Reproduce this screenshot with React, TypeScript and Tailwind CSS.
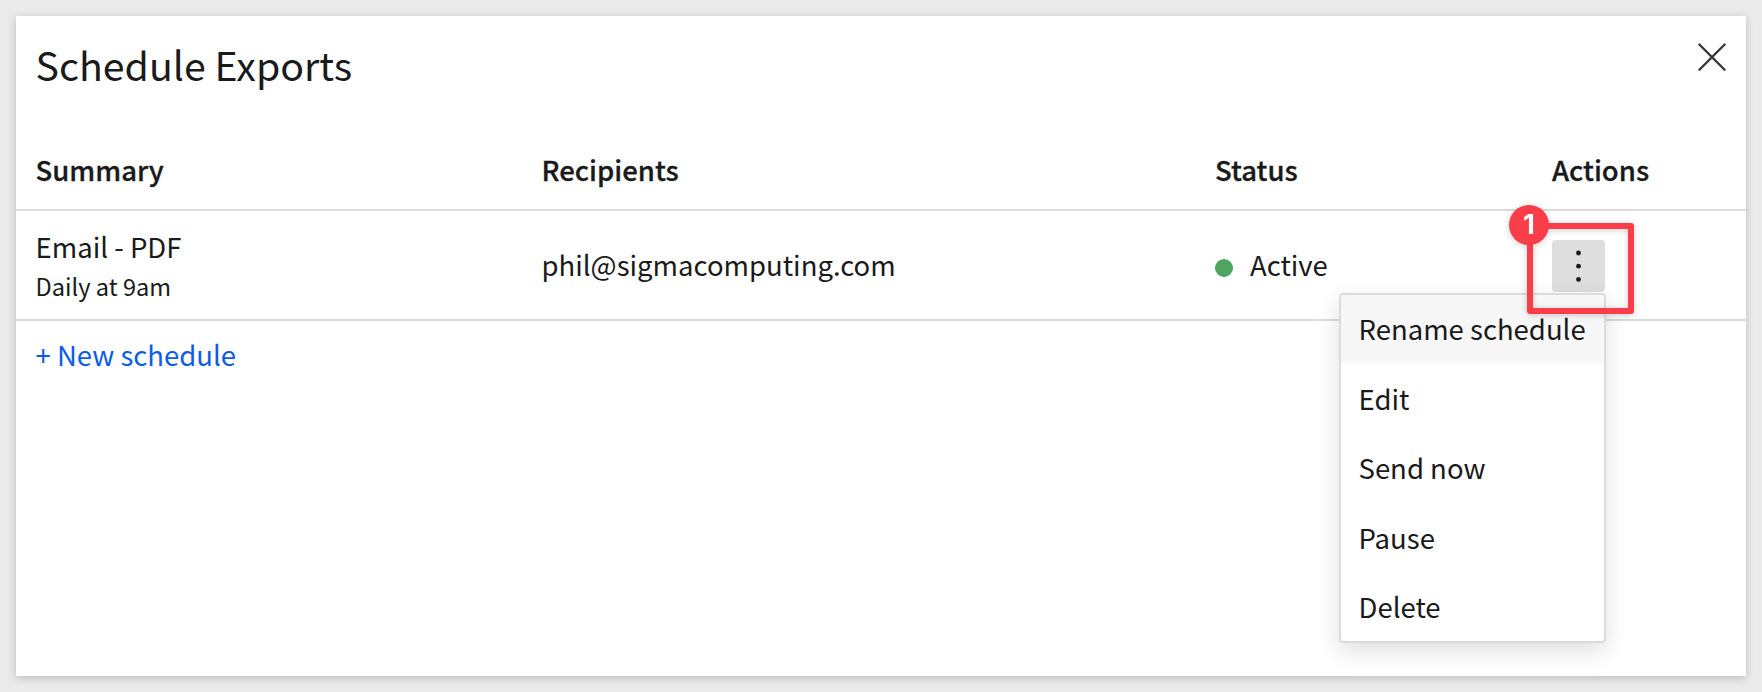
const columns = "grid grid-cols-[506px_673.5px_337px_1fr] pl-[19.5px]";

const menuItems = ["Rename schedule", "Edit", "Send now", "Pause", "Delete"];

function CloseIcon() {
  return (
    <svg width="28" height="28" viewBox="0 0 28 28" fill="none" stroke="#333338" strokeWidth="2.3" strokeLinecap="round">
      <path d="M1.4 1.5 26.6 26.7M26.6 1.5 1.4 26.7" />
    </svg>
  );
}

function KebabIcon() {
  return (
    <svg width="53" height="52" viewBox="0 0 53 52" fill="#1a1a1a">
      <circle cx="26.5" cy="13" r="2.4" />
      <circle cx="26.5" cy="26.2" r="2.4" />
      <circle cx="26.5" cy="39.4" r="2.4" />
    </svg>
  );
}

function ActionsMenu() {
  return (
    <ul className="absolute top-[53px] right-[-1px] w-[267px] rounded-[4px] border-2 border-[#dbdbdb] bg-white shadow-[0_8px_24px_rgba(0,0,0,0.13)]">
      {menuItems.map((item, i) => (
        <li
          key={item}
          className={
            i === 0
              ? "flex h-[68px] items-center whitespace-nowrap bg-[#f7f7f7] pb-[3px] pl-[17.5px]"
              : "flex h-[69.5px] items-center whitespace-nowrap pl-[17.5px]"
          }
        >
          {item}
        </li>
      ))}
    </ul>
  );
}

function Callout() {
  return (
    <div className="pointer-events-none absolute top-[-17px] left-[-25px] h-[91px] w-[107px] rounded-[3px] border-6 border-[#f93e49] drop-shadow-[0_1px_3px_rgba(0,0,0,0.2)]">
      <div className="absolute top-[-24px] left-[-24px] flex size-10 items-center justify-center rounded-full bg-[#f93e49] pb-px font-[Inter,sans-serif] text-[27.5px] leading-none font-bold text-white">
        1
      </div>
    </div>
  );
}

export default function App() {
  return (
    <div className="h-[692px] bg-[#eaeaea] p-4 font-['Noto_Sans_CJK_SC',sans-serif] text-[27.5px] leading-10 text-[#1a1a1a]">
      <section className="flex h-[660px] flex-col bg-white shadow-[0_2px_8px_rgba(0,0,0,0.2)]">
        <header className="flex h-[121px] items-start justify-between pr-5 pl-[19.5px]">
          <h1 className="pt-[18px] text-[39.3px] leading-[60px]">Schedule Exports</h1>
          <button className="mt-[27px]" aria-label="Close">
            <CloseIcon />
          </button>
        </header>
        <div className={`${columns} h-[74px] items-center border-b-2 border-[#dbdbdb] pb-[9px] font-medium [-webkit-text-stroke:0.3px_#1a1a1a]`}>
          <div>Summary</div>
          <div>Recipients</div>
          <div>Status</div>
          <div>Actions</div>
        </div>
        <div className={`${columns} h-[110px] items-center border-b-2 border-[#dbdbdb]`}>
          <div>
            <div>Email - PDF</div>
            <div className="-mb-0.5 pt-px text-[23.6px] leading-[39px]">Daily at 9am</div>
          </div>
          <div className="pb-0.5">phil@sigmacomputing.com</div>
          <div className="flex items-center gap-[17px] pb-0.5">
            <span className="mt-2 size-[18px] rounded-full bg-[#4ea55f]" />
            Active
          </div>
          <div className="relative mt-0.5 w-[53px]">
            <button className="block h-[52px] w-[53px] rounded-[4px] bg-[#dedede]" aria-label="Schedule actions">
              <KebabIcon />
            </button>
            <ActionsMenu />
            <Callout />
          </div>
        </div>
        <button className="mt-[13px] self-start pl-[19.5px] text-[#0b5ce8]">+ New schedule</button>
      </section>
    </div>
  );
}
